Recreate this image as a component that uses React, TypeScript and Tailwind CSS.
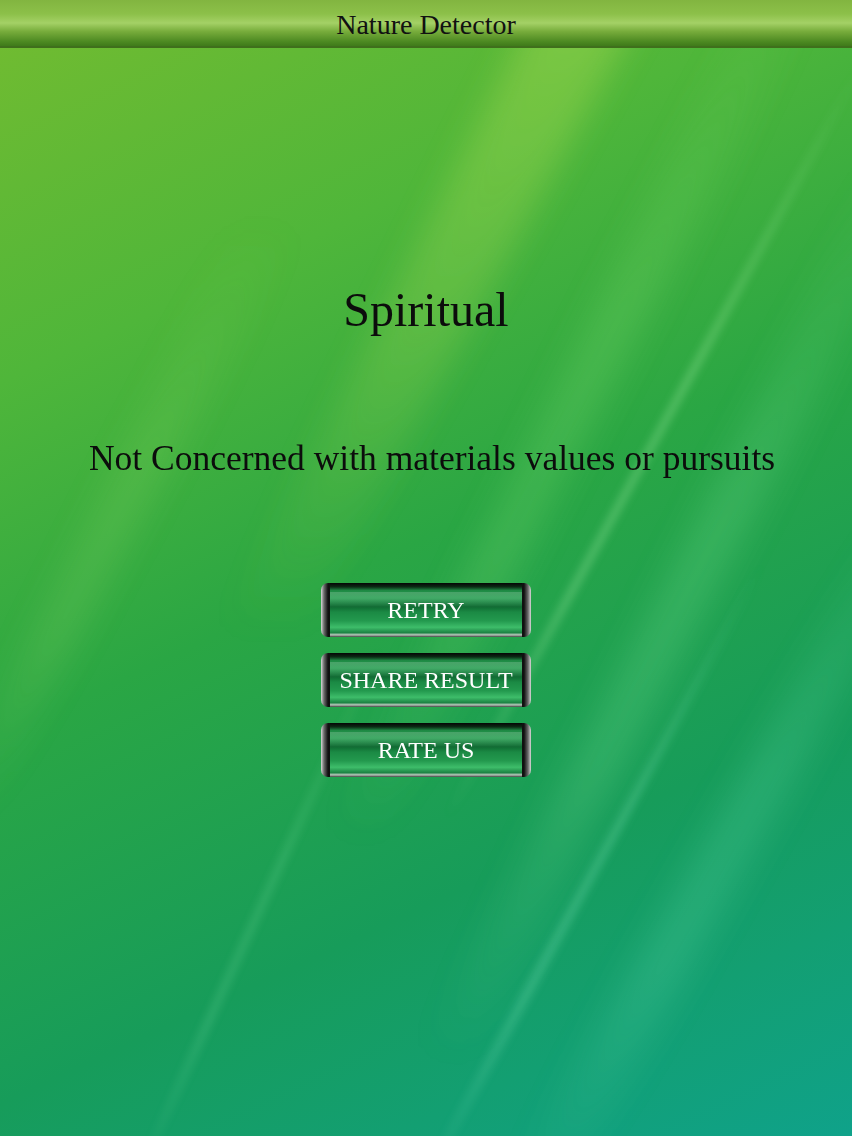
import React from 'react';

const serif = { fontFamily: '"Liberation Serif", "Times New Roman", serif' };

// soft diagonal light streaks over the green backdrop
function Streaks() {
  return (
    <svg className="pointer-events-none absolute inset-0 h-full w-full" viewBox="0 0 852 1136" preserveAspectRatio="none">
      <defs>
        <filter id="soft" x="-50%" y="-50%" width="200%" height="200%">
          <feGaussianBlur stdDeviation="16" />
        </filter>
        <filter id="softer" x="-50%" y="-50%" width="200%" height="200%">
          <feGaussianBlur stdDeviation="4" />
        </filter>
        <linearGradient id="fadeDown" x1="0" y1="0" x2="0" y2="1">
          <stop offset="0" stopColor="#fff" stopOpacity="1" />
          <stop offset="0.55" stopColor="#fff" stopOpacity="0.6" />
          <stop offset="1" stopColor="#fff" stopOpacity="0" />
        </linearGradient>
        <linearGradient id="fadeBoth" x1="0" y1="0" x2="0" y2="1">
          <stop offset="0" stopColor="#fff" stopOpacity="0" />
          <stop offset="0.4" stopColor="#fff" stopOpacity="1" />
          <stop offset="0.7" stopColor="#fff" stopOpacity="1" />
          <stop offset="1" stopColor="#fff" stopOpacity="0" />
        </linearGradient>
        <mask id="mDown" maskContentUnits="objectBoundingBox">
          <rect width="1" height="1" fill="url(#fadeDown)" />
        </mask>
        <mask id="mBoth" maskContentUnits="objectBoundingBox">
          <rect width="1" height="1" fill="url(#fadeBoth)" />
        </mask>
      </defs>
      <g filter="url(#soft)">
        <polygon mask="url(#mDown)" points="570,-60 680,-60 300,640 220,640" fill="#d8f060" opacity="0.3" />
        <polygon mask="url(#mBoth)" points="780,-60 840,-60 380,840 330,840" fill="#90e878" opacity="0.2" />
        <polygon mask="url(#mBoth)" points="900,120 920,200 470,1060 420,1060" fill="#90f0a8" opacity="0.18" />
        <polygon mask="url(#mBoth)" points="240,220 300,220 -20,820 -60,820" fill="#b0e878" opacity="0.14" />
        <polygon mask="url(#mBoth)" points="920,460 940,520 560,1200 500,1200" fill="#80f0c0" opacity="0.16" />
      </g>
      <g filter="url(#softer)">
        <polygon mask="url(#mBoth)" points="860,60 868,60 450,820 442,820" fill="#c0ffb8" opacity="0.3" />
        <polygon mask="url(#mBoth)" points="760,560 768,560 430,1180 420,1180" fill="#a8ffd8" opacity="0.24" />
        <polygon mask="url(#mBoth)" points="380,640 386,640 140,1180 132,1180" fill="#a8ffc8" opacity="0.18" />
      </g>
    </svg>
  );
}

function GlassButton({ label }: { label: string }) {
  return (
    <button
      className="relative flex h-[54px] w-[210px] items-center justify-center overflow-hidden rounded-[7px] bg-[linear-gradient(90deg,#d8d8d8_0px,#6a6a6a_3px,#101010_7px,#101010_9px,transparent_9px,transparent_201px,#101010_201px,#101010_203px,#6a6a6a_207px,#d8d8d8_210px)]"
    >
      <span className="absolute inset-y-0 left-[9px] right-[9px] bg-[linear-gradient(180deg,#050505_0%,#0b2a14_7%,#1e8a44_14%,#2aa054_28%,#0f6a32_44%,#1b8a44_54%,#23994e_70%,#3ebd6a_82%,#1c8444_92%,#b8c8bc_96%,#404040_100%)]" />
      <span className="absolute left-[9px] right-[9px] top-[16%] h-[30%] bg-[linear-gradient(180deg,rgba(255,255,255,0.18),rgba(255,255,255,0))]" />
      <span className="relative text-[24px] text-white" style={serif}>
        {label}
      </span>
    </button>
  );
}

export default function App() {
  return (
    <div className="relative flex min-h-[1136px] w-full flex-col overflow-hidden bg-[linear-gradient(155deg,#74bc30_0%,#4fb63a_25%,#2aa644_48%,#179c5a_72%,#0fa28a_100%)]">
      <Streaks />

      <header className="relative flex h-12 items-center justify-center border-b-2 border-[#3f6f1c] bg-[linear-gradient(180deg,#82b540_0%,#8cc049_30%,#a4d166_50%,#78ad3c_68%,#4d8a22_90%,#3f7a1a_100%)] pt-[3px]">
        <h1 className="text-[28px] leading-none text-[#111]" style={serif}>
          Nature Detector
        </h1>
      </header>

      <main className="relative flex flex-col items-center pt-[234px]" style={serif}>
        <h2 className="text-[48px] leading-[56px] text-[#0c0c0c]">Spiritual</h2>
        <p className="mt-[99px] pl-[12px] text-[35.5px] leading-[42px] text-[#0c0c0c]">
          Not Concerned with materials values or pursuits
        </p>
        <div className="mt-[104px] flex flex-col gap-4">
          <GlassButton label="RETRY" />
          <GlassButton label="SHARE RESULT" />
          <GlassButton label="RATE US" />
        </div>
      </main>
    </div>
  );
}
